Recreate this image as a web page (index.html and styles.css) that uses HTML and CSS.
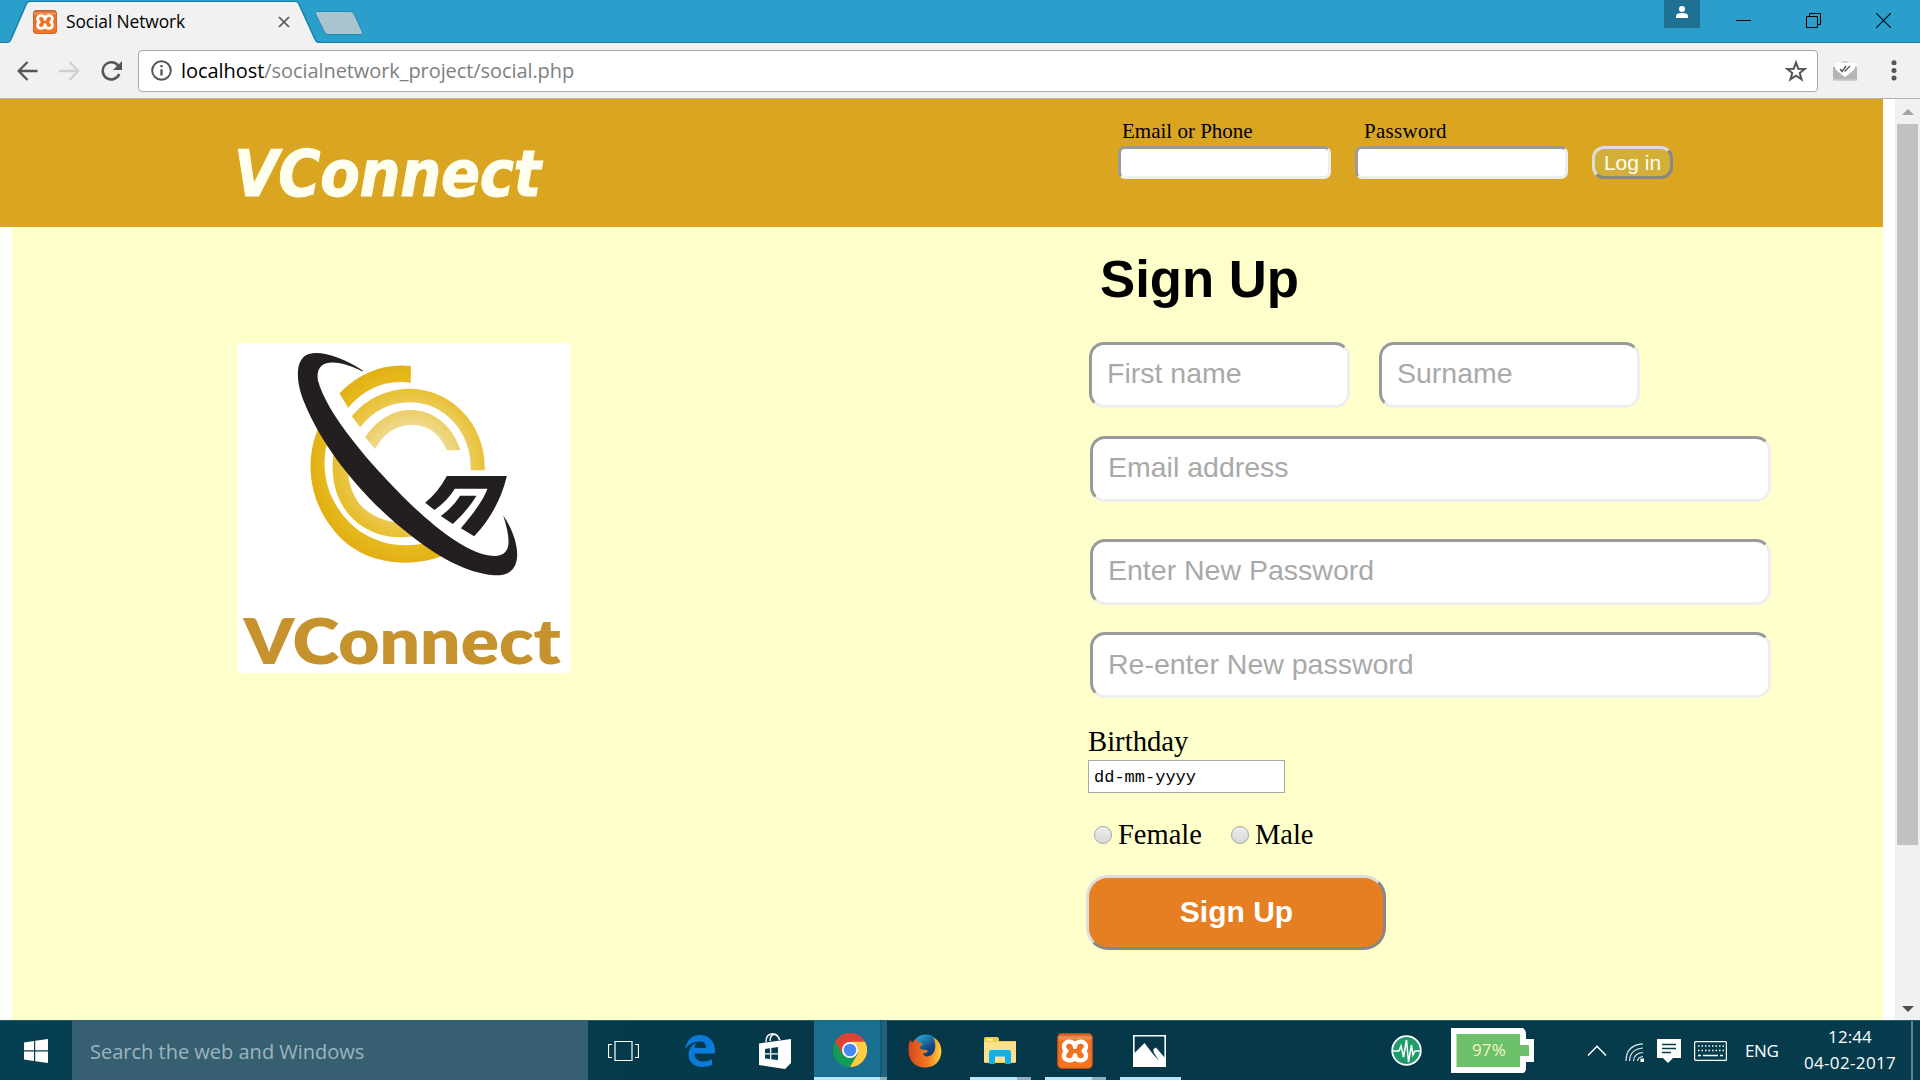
FILE: index.html
```html
<!DOCTYPE html>
<html lang="en">
<head>
<meta charset="utf-8">
<title>Social Network</title>
<link rel="stylesheet" href="styles.css">
</head>
<body>
<svg width="0" height="0" class="defs" aria-hidden="true">
  <defs>
    <linearGradient id="orange" x1="0" y1="0" x2="0" y2="1"><stop offset="0" stop-color="#c5581c"/><stop offset=".12" stop-color="#f0945a"/><stop offset=".22" stop-color="#ee6f24"/><stop offset="1" stop-color="#f9761f"/></linearGradient>
    <symbol id="xampp" viewBox="0 0 36 36">
      <rect x=".7" y=".7" width="34.6" height="34.6" rx="4" fill="url(#orange)" stroke="#b9501a" stroke-width="1.2"/>
      <path d="M18 14C17.500 7 8 7 7 12.500Q6.500 16 9.500 18Q6.500 20 7 23.500C8 29 17.500 29 18 22C18.500 29 28 29 29 23.500Q29.500 20 26.500 18Q29.500 16 29 12.500C28 7 18.500 7 18 14Z" fill="none" stroke="#fff" stroke-width="4.200" stroke-linejoin="round"/>
    </symbol>
  </defs>
</svg>

<div class="titlebar">
  <svg class="tab-shape" width="380" height="43" viewBox="0 0 380 43">
    <path d="M0 42.500H8Q10 42 11 39L26 4Q27 1.500 30 1.500H295Q298 1.500 299.500 5L315 39Q316 42.500 319 42.500H380" fill="none" stroke="#1c7699"/>
    <path d="M8 43Q11 42 12 39L27 4.500Q28 2 30 2H295Q297.500 2 298.500 5L314 39Q315 42 318 43Z" fill="#f1f1f1"/>
    <path d="M317 11.500H350Q353 11.500 354 14L362.500 32Q363 34.500 361 34.500H328Q325.500 34.500 324.500 32L315.500 14Q315 11.500 317 11.500Z" fill="#a9c4ce" stroke="#2489b0"/>
  </svg>
  <div class="tab">
    <svg width="24" height="24"><use href="#xampp"/></svg>
    <span class="tab-title">Social Network</span>
    <svg class="tab-close" width="12" height="12" viewBox="0 0 12 12"><path d="M1 1L11 11M11 1L1 11" stroke="#555" stroke-width="1.700"/></svg>
  </div>
  <div class="window-controls">
    <div class="profile"><svg width="12" height="12" viewBox="0 0 12 12"><circle cx="6" cy="3" r="3" fill="#fff"/><path d="M0 12V10Q0 7 6 7T12 10V12Z" fill="#fff"/></svg></div>
    <svg width="15" height="15" viewBox="0 0 15 15"><path d="M0 7.500H15" stroke="#000"/></svg>
    <svg width="15" height="15" viewBox="0 0 15 15"><path d="M.5 3.500H11.500V14.500H.5ZM3.500 3.500V.5H14.500V11.500H11.500" fill="none" stroke="#000"/></svg>
    <svg width="15" height="15" viewBox="0 0 15 15"><path d="M0 0L15 15M15 0L0 15" stroke="#000" stroke-width="1.100"/></svg>
  </div>
</div>

<div class="toolbar">
  <div class="nav-icons">
    <svg width="21" height="20" viewBox="0 0 21 20" fill="none" stroke="#555" stroke-width="2.300"><path d="M20.500 10H2M10.500 1L1.700 10L10.500 19"/></svg>
    <svg width="21" height="20" viewBox="0 0 21 20" fill="none" stroke="#cfcfcf" stroke-width="2.300"><path d="M0 10H19M10.500 1L19.300 10L10.500 19"/></svg>
    <svg width="22" height="20" viewBox="0 0 22 20"><path d="M18.300 13A8.600 8.600 0 1 1 17.200 4.700" fill="none" stroke="#555" stroke-width="2.500"/><path d="M21 0V9H12Z" fill="#555"/></svg>
  </div>
  <div class="address">
    <svg width="21" height="21" viewBox="0 0 21 21"><circle cx="10.500" cy="10.500" r="9.300" fill="none" stroke="#555" stroke-width="2"/><path d="M10.500 9.200V15.500M10.500 5V7.300" stroke="#555" stroke-width="2.300"/></svg>
    <span class="url"><span class="host">localhost</span><span class="path">/socialnetwork_project/social.php</span></span>
    <svg class="star" width="22" height="22" viewBox="0 0 22 22"><path d="M11 2.500L13.300 8.700L20 8.900L14.700 13L16.600 19.400L11 15.700L5.400 19.400L7.300 13L2 8.900L8.700 8.700Z" fill="none" stroke="#555" stroke-width="2"/></svg>
  </div>
  <svg class="mail" width="24" height="20" viewBox="0 0 24 20"><path d="M0 6H24V20H0Z" fill="#b5b5b5"/><path d="M0 18.500H24V20H0Z" fill="#d0d0d0"/><path d="M9 1.500Q12 -.5 15 1.500" stroke="#bbb" fill="none"/><path d="M3 2H21Q23 4 21 9L12 16L3 9Q1 4 3 2Z" fill="#fff"/><path d="M7 8L9 10.500L13 5M11.500 10.500L17 5" fill="none" stroke="#555" stroke-width="1.400"/></svg>
  <svg class="menu" width="6" height="21" viewBox="0 0 6 21" fill="#555"><circle cx="3" cy="2.700" r="2.500"/><circle cx="3" cy="10.400" r="2.500"/><circle cx="3" cy="18.100" r="2.500"/></svg>
</div>

<div class="viewport">
  <div class="page">
    <header class="site-header">
      <h1 class="brand">VConnect</h1>
      <form class="login">
        <label class="login-field"><span>Email or Phone</span><input type="text"></label>
        <label class="login-field password"><span>Password</span><input type="password"></label>
        <button type="button" class="login-button">Log in</button>
      </form>
    </header>
    <main class="content">
      <svg class="logo" width="334" height="330" viewBox="52 39 1001 990">
        <defs>
          <radialGradient id="gold" gradientUnits="userSpaceOnUse" cx="575" cy="400" r="300"><stop offset="0" stop-color="#f6ecc0"/><stop offset=".38" stop-color="#efd98c"/><stop offset=".62" stop-color="#ebc84f"/><stop offset=".86" stop-color="#e5b91c"/><stop offset="1" stop-color="#e3b014"/></radialGradient>
        </defs>
        <rect x="52" y="39" width="1001" height="990" fill="#fff"/>
        <g fill="url(#gold)">
          <path d="M573 108V158Q462 144 385 233L359 190Q450 96 573 108Z"/>
          <path d="M396 259C440 204 505 176 572 176C700 178 800 290 795 421H753C756 306 674 218 572 217C510 217 460 242 421 292Z"/>
          <path d="M436 322C470 270 520 240 572 240C640 240 697 285 722 361H681C661 311 624 284 575 284C529 286 490 310 466 357Z"/>
          <path d="M300 285C252 385 267 505 335 592C420 710 580 720 690 668L640 632C540 665 440 636 380 568C310 490 302 397 327 320Z"/>
          <path d="M344 350C328 440 345 520 410 576C464 620 530 630 600 616L555 578C490 578 440 552 412 512C392 480 384 448 384 403Z"/>
        </g>
        <g fill="#231f20">
          <path d="M430 122C370 83 310 63 270 71C222 82 228 160 254 219C316 370 445 518 575 618C670 692 760 737 840 736C920 728 895 620 850 556C870 620 880 675 828 678C752 678 655 600 575 525C445 398 320 250 294 150C285 85 350 85 427 124Z"/>
          <path d="M681 438H861C845 505 815 563 763 619L723 595C765 545 790 510 803 476H705Q683 512 644 540L616 518Q654 488 681 438Z"/>
          <path d="M721 497H770Q743 542 699 582L663 558Q699 532 721 497Z"/>
        </g>
        <text class="logo-word" x="72" y="1002" textLength="951" lengthAdjust="spacingAndGlyphs">VConnect</text>
      </svg>
      <form class="signup">
        <h2>Sign Up</h2>
        <div class="names"><input class="field" type="text" placeholder="First name"><input class="field" type="text" placeholder="Surname"></div>
        <input class="field wide" type="text" placeholder="Email address">
        <input class="field wide new-password" type="text" placeholder="Enter New Password">
        <input class="field wide" type="text" placeholder="Re-enter New password">
        <label class="birthday"><span>Birthday</span><input type="text" value="dd-mm-yyyy"></label>
        <div class="gender">
          <label><span class="radio"></span>Female</label>
          <label><span class="radio"></span>Male</label>
        </div>
        <button type="button" class="signup-button">Sign Up</button>
      </form>
    </main>
  </div>
  <div class="scrollbar">
    <svg width="12" height="6" viewBox="0 0 12 6"><path d="M0 6L6 0L12 6Z" fill="#a3a3a3"/></svg>
    <div class="thumb"></div>
    <svg class="down" width="12" height="6" viewBox="0 0 12 6"><path d="M0 0L6 6L12 0Z" fill="#505050"/></svg>
  </div>
</div>

<div class="taskbar">
  <div class="start"><svg width="24" height="24" viewBox="0 0 24 24" fill="#fff"><path d="M0 3.400L10 2V11.200H0ZM11.200 1.800L24 0V11.200H11.200ZM0 12.400H10V22L0 20.600ZM11.200 12.400H24V24L11.200 22.200Z"/></svg></div>
  <div class="search"><span>Search the web and Windows</span></div>
  <div class="task"><svg width="31" height="20" viewBox="0 0 31 20"><path d="M7 .5H24V19.500H7ZM4 3.500H.5V16.500H4M27 3.500H30.500V16.500H27" fill="none" stroke="#fff" stroke-width="1.200"/></svg></div>
  <div class="task"><svg width="30" height="32" viewBox="0 0 30 32"><path d="M0 14.500C1.500 5 7 0 15 0C24.500 0 30 7 30 15V18.500H9.500C9.500 24 13.500 26.500 18.500 26.500Q23 26.500 27 24V30Q22.500 32 17 32C9 32 3.500 27 3.500 19.500C3.500 14 7 10 11.500 8Q9.700 10 9.500 13H21C21 8 18.500 6.500 15 6.500C8 6.500 3 9.500 0 14.500Z" fill="#0b7ad8"/></svg></div>
  <div class="task"><svg width="32" height="36" viewBox="0 0 32 36"><path d="M7 9Q7 1 13.500 .8Q18 1 21 7M11 8Q11 1.500 16 1.200Q19 2 20.500 7" fill="none" stroke="#fff" stroke-width="1.400"/><path d="M0 10.500L32 6V30L26 36L0 32Z" fill="#fff"/><path d="M6 16L11 15.200V20.200H6ZM12.300 15L19 14V20.200H12.300ZM6 21.500H11V26L6 25.400ZM12.300 21.500H19V27L12.300 26.200Z" fill="#063c4e"/></svg></div>
  <div class="task active double"><svg width="34" height="34" viewBox="0 0 34 34"><circle cx="17" cy="17" r="17" fill="#db4437"/><path d="M2.300 8.500A17 17 0 0 0 17 34L24.400 21.200L17 25L9.600 21.200Z" fill="#0f9d58"/><path d="M31.800 8.500A17 17 0 0 1 17 34L24.500 21.200L24.400 13L17 8.500Z" fill="#ffcd40"/><path d="M2.300 8.500A17 17 0 0 1 31.800 8.500H17L9 15Z" fill="#db4437"/><circle cx="17" cy="17" r="8" fill="#fff"/><circle cx="17" cy="17" r="6.300" fill="#4688f4"/></svg></div>
  <div class="task"><svg width="34" height="34" viewBox="0 0 34 34"><defs><linearGradient id="fox" x1="0" y1="0" x2="1" y2="0"><stop offset="0" stop-color="#d9441c"/><stop offset=".6" stop-color="#f08020"/><stop offset="1" stop-color="#ffd23c"/></linearGradient><linearGradient id="globe" x1="0" y1="0" x2=".7" y2="1"><stop offset="0" stop-color="#35c0f2"/><stop offset=".6" stop-color="#12467f"/><stop offset="1" stop-color="#0e2f63"/></linearGradient></defs><circle cx="18" cy="15" r="14.500" fill="url(#globe)"/><path d="M2 6L4.500 8.500Q7 5 9 5Q9 7 10 8.500Q13 8 14.500 9.500Q14 11.500 11.500 13Q12 15 14 15.500L20 16.500Q19 19.500 15 19.500Q16 23 20 22.500Q26 21 27 15Q28 8 25 3.500Q33 7 33.500 17C33 28 26 33.500 17 33.500C7 33.500 .5 26 .5 17Q0 11 2 6Z" fill="url(#fox)"/></svg></div>
  <div class="task open double"><svg width="32" height="27" viewBox="0 0 32 27"><path d="M0 1.500Q0 0 1.500 0H13Q15 0 15 2V4H32V25Q32 26 31 26H1Q0 26 0 25Z" fill="#f5ca4c"/><path d="M0 5H32V25H0Z" fill="#fde08a"/><path d="M3 2H9V3.500H3Z" fill="#fff"/><path d="M5 15Q5 13 7 13H25Q27 13 27 15V27H21V19.500H11V27H5Z" fill="#0fb2ed"/></svg></div>
  <div class="task open double"><svg width="36" height="36"><use href="#xampp"/></svg></div>
  <div class="task open"><svg width="33" height="32" viewBox="0 0 33 32"><path d="M.8 .8H32.200V31.200H.8Z" fill="none" stroke="#fff" stroke-width="1.600"/><path d="M1 18.500L11.500 8L19.500 18.500L26 26L20.500 17V14L23 12.500L32 23V31H1Z" fill="#fff"/></svg></div>

  <div class="tray">
    <svg class="pulse" width="31" height="31" viewBox="0 0 31 31"><circle cx="15.500" cy="15.500" r="14.300" fill="#1f9b6c" stroke="#fff" stroke-width="1.800"/><path d="M1 16H8L10 11L12.500 22L15.500 5L17.500 27L20.500 10L22 20L24 16H30" fill="none" stroke="#fff" stroke-width="1.500"/></svg>
    <div class="battery">
      <svg width="83" height="45" viewBox="0 0 83 45"><path d="M0 0H72Q75 2 75 6V11H83V34H75V41Q75 44 72 45H0Z" fill="#fff"/><path d="M5.500 6H69V17H78V28H69V39H5.500Z" fill="#6cc16a"/></svg>
      <span>97%</span>
    </div>
    <svg class="chevron" width="20" height="11" viewBox="0 0 20 11"><path d="M1 10.500L10 1.300L19 10.500" fill="none" stroke="#fff" stroke-width="1.500"/></svg>
    <svg class="wifi" width="19" height="19" viewBox="0 0 19 19"><path d="M1 18Q1 2 18 .8M4.500 18Q5 6 18 5M8.500 18Q9 10 18 9.500M12.500 18Q13 14 18 13.500" fill="none" stroke="#dfe9ec" stroke-width="1.200"/><path d="M15.500 15.500H19V19H15.500Z" fill="#fff"/></svg>
    <svg class="message" width="24" height="24" viewBox="0 0 24 24"><path d="M0 0H24V19H16L11 24L6 19H0Z" fill="#fff"/><path d="M5 5.500H19M5 9.500H19M5 13.500H14" stroke="#063c4e" stroke-width="1.300"/></svg>
    <svg class="keyboard" width="33" height="20" viewBox="0 0 33 20"><rect x=".6" y=".6" width="31.800" height="18.800" rx="1" fill="none" stroke="#fff" stroke-width="1.200"/><path d="M4 5H30M4 9.500H30" stroke="#fff" stroke-width="1.300" stroke-dasharray="1.500 2"/><path d="M4 14.500H7M9 14.500H24M26 14.500H29" stroke="#fff" stroke-width="1.300"/></svg>
    <span class="lang">ENG</span>
    <div class="clock"><span class="time">12:44</span><span class="date">04-02-2017</span></div>
    <div class="show-desktop"></div>
  </div>
</div>
</body>
</html>
```
FILE: styles.css
```css
* { box-sizing: border-box; }
body { margin: 0; width: 1920px; height: 1080px; overflow: hidden; display: flex; flex-direction: column; font-family: "Open Sans", "Noto Sans", sans-serif; background: #fff; }
svg { display: block; flex: none; }
.defs { position: absolute; }
input, button { font-family: "Liberation Sans", Arial, sans-serif; outline: none; margin: 0; }

.titlebar { flex: none; position: relative; height: 43px; background: #2a9fcc; border-bottom: 1px solid #1c7699; display: flex; justify-content: space-between; }
.tab-shape { position: absolute; left: 0; top: 0; }
.tab { position: relative; display: flex; align-items: center; width: 290px; height: 43px; padding-left: 33px; }
.tab-title { margin: -1px 0 0 9px; font-size: 17.400px; letter-spacing: -.1px; line-height: 24px; flex: 1; white-space: nowrap; }
.window-controls { display: flex; padding-right: 29px; gap: 55px; padding-top: 13px; }
.profile { width: 36px; height: 28px; margin: -13px -19px 0 0; background: #1e7192; display: flex; justify-content: center; padding-top: 6px; }

.toolbar { flex: none; height: 56px; background: #f1f1f1; border-bottom: 1px solid #b4b3b3; display: flex; align-items: center; }
.nav-icons { display: flex; gap: 21px; width: 138px; padding-left: 17px; }
.address { width: 1680px; height: 42px; background: #fff; border: 1px solid #a9a9a9; border-radius: 4px; display: flex; align-items: center; padding: 0 10px 0 12px; }
.url { font-size: 20px; line-height: 28px; margin-left: 9px; flex: 1; white-space: nowrap; }
.host { color: #000; letter-spacing: -.05px; }
.path { color: #808080; letter-spacing: -.08px; }
.mail { margin-left: 15px; }
.menu { margin-left: 34px; }

.viewport { flex: none; height: 921px; display: flex; overflow: hidden; }
.page { width: 1895px; padding-right: 12px; }
.site-header { height: 128px; background: #daa520; display: flex; justify-content: space-between; padding: 0 210px 0 234px; }
.brand { margin: 30px 0 0; font: italic 700 64px/90px "DejaVu Sans Condensed", "DejaVu Sans", sans-serif; font-stretch: condensed; color: #fffff0; -webkit-text-stroke: 1px #fffff0; letter-spacing: -.3px; height: 90px; }
.login { display: flex; align-items: flex-start; padding-top: 20px; }
.login-field { width: 213px; margin-right: 24px; font: 21px/24px "Liberation Serif", "Times New Roman", serif; }
.login-field span { display: block; height: 27px; padding-left: 4px; }
.login-field.password span { padding-left: 9px; letter-spacing: .3px; }
.login-field input { display: block; width: 213px; height: 33px; letter-spacing: normal; }
.login-field input, .field { background: #fff; border: 3px solid; border-color: #9a9a9a #eee #eee #9a9a9a; border-radius: 7px; padding: 0; }
.login-button { margin-top: 27px; width: 81px; height: 33px; border: 3px solid; border-color: #ddd #888 #888 #ddd; border-radius: 12px; background: #d4af37; color: #fffff0; font-size: 21px; line-height: 26px; padding: 0; }

.content { margin-left: 12px; height: 793px; background: #ffffcc; display: flex; padding-left: 225px; }
.logo { margin-top: 116px; overflow: visible; }
.logo-word { font: 800 186px Lato, "Open Sans", sans-serif; fill: #c5922e; }
.signup { margin-left: 515px; width: 700px; display: flex; flex-direction: column; align-items: flex-start; }
.signup h2 { margin: 22px 0 0 14px; height: 93px; font: 700 52.700px/60px "Liberation Sans", Arial, sans-serif; }
.names { display: flex; gap: 29px; margin-left: 3px; }
.field { width: 261px; height: 66px; border-radius: 15px; padding: 0 0 3px 15px; font-size: 28.500px; color: #a9a9a9; }
.field::placeholder { color: #a9a9a9; opacity: 1; }
.field.wide { width: 681px; margin: 28px 0 0 4px; }
.field.new-password { margin-top: 37px; }
.field.new-password + .field { margin-top: 27px; padding-bottom: 1px; }
.birthday { display: block; margin: 28px 0 0 2px; font: 28.700px/32px "Liberation Serif", "Times New Roman", serif; }
.birthday span { display: block; height: 34px; line-height: 30px; }
.birthday input { display: block; width: 197px; height: 33px; border: 1px solid #a9a9a9; background: #fff; padding: 2px 5px 0; font: 17px "Liberation Mono", monospace; }
.gender { display: flex; gap: 29px; margin: 25px 0 0 8px; font: 28.500px/34px "Liberation Serif", "Times New Roman", serif; }
.gender label { display: flex; align-items: center; }
.radio { width: 18px; height: 18px; border-radius: 50%; border: 1px solid #a8a8a8; background: linear-gradient(#eee, #d8d8d8); margin-right: 6px; }
.signup-button { margin-top: 23px; width: 300px; height: 75px; border: 3px solid; border-color: #ddd #888 #888 #ddd; border-radius: 22px; background: #e67e22; color: #fff; font-size: 30px; font-weight: 700; padding: 0 0 1px 1px; }

.scrollbar { width: 25px; background: #f1f1f1; display: flex; flex-direction: column; align-items: center; padding-top: 10px; }
.thumb { width: 21px; height: 721px; margin-top: 9px; background: #c1c1c1; }
.down { margin-top: 161px; }

.taskbar { flex: none; height: 60px; background: linear-gradient(90deg, #063f51, #043748 50%, #063c4d); display: flex; border-top: 1px solid #2a5a69; color: #fff; }
.start { width: 72px; display: flex; align-items: center; justify-content: center; }
.search { width: 516px; background: #365f71; margin-top: -1px; display: flex; align-items: center; padding: 2px 0 0 18px; color: #9db5be; font-size: 20px; white-space: nowrap; }
.task { width: 75px; position: relative; display: flex; align-items: center; justify-content: center; }
.search + .task { width: 74px; padding-right: 3px; }
.task.active { margin-top: -1px; background: linear-gradient(90deg, transparent 2px, #196f8f 2px 68px, #0f5c78 68px 70px, #25617a 70px); }
.task.open::after, .task.active::after { content: ""; position: absolute; left: 8px; bottom: 0; width: 61px; height: 3px; background: #b6e8fa; }
.task.open.double::after { background: linear-gradient(90deg, #b6e8fa 47px, #8fb0bd 47px); }
.task.active.double::after { left: 2px; width: 73px; background: linear-gradient(90deg, #b6e8fa 66px, #8fb0bd 66px); }
.tray { flex: 1; display: flex; align-items: center; padding-left: 204px; }
.pulse { margin-right: 29px; }
.battery { position: relative; }
.battery span { position: absolute; left: 21px; top: 9px; font-size: 17px; line-height: 26px; color: #f2f5c4; letter-spacing: .1px; }
.chevron { margin-left: 53px; }
.wifi { margin: 4px 0 0 18px; }
.message { margin-left: 13px; }
.keyboard { margin-left: 13px; }
.lang { margin-left: 18px; width: 35px; font-size: 17px; letter-spacing: -.4px; }
.clock { width: 96px; margin: -2px 0 0 22px; display: flex; flex-direction: column; align-items: center; font-size: 17px; line-height: 26px; white-space: nowrap; }
.time { letter-spacing: .1px; }
.date { letter-spacing: .35px; }
.show-desktop { margin-left: 13px; width: 2px; align-self: stretch; background: #5f8490; }
```
